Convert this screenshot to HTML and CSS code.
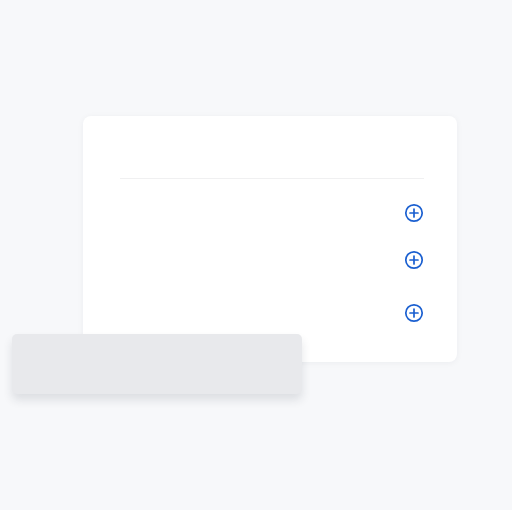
FILE: index.html
```html
<!DOCTYPE html>
<html lang="en">
<head>
    <meta charset="UTF-8">
    <title>Panel</title>
    <link rel="stylesheet" href="styles.css">
</head>
<body>
    <div class="stage">
        <div class="card">
            <div class="divider"></div>
            <div class="row row-1">
                <svg class="add" viewBox="0 0 20 20"><circle cx="10" cy="10" r="8.2"/><path d="M10 6v8M6 10h8"/></svg>
            </div>
            <div class="row row-2">
                <svg class="add" viewBox="0 0 20 20"><circle cx="10" cy="10" r="8.2"/><path d="M10 6v8M6 10h8"/></svg>
            </div>
            <div class="row row-3">
                <svg class="add" viewBox="0 0 20 20"><circle cx="10" cy="10" r="8.2"/><path d="M10 6v8M6 10h8"/></svg>
            </div>
        </div>
        <div class="toast"></div>
    </div>
</body>
</html>
```

FILE: styles.css
```css
* {
    box-sizing: border-box;
}

body {
    margin: 0;
    background: #f7f8fa;
    font-family: 'Roboto', sans-serif;
    height: 510px;
    overflow: hidden;
}

.stage {
    padding: 116px 0 0 12px;
}

.card {
    margin-left: 71px;
    width: 374px;
    height: 246px;
    background: #fff;
    border-radius: 8px;
    box-shadow: 0 1px 6px rgba(20, 30, 50, 0.05);
    padding: 62px 33px 0 37px;
}

.divider {
    height: 1px;
    background: #f0f0f1;
}

.row {
    display: flex;
    justify-content: flex-end;
}

.row-1 {
    margin-top: 24px;
}

.row-2 {
    margin-top: 27px;
}

.row-3 {
    margin-top: 33px;
}

.add {
    width: 20px;
    height: 20px;
    fill: none;
    stroke: #1a5fd0;
    stroke-width: 1.7;
    stroke-linecap: round;
}

.toast {
    position: relative;
    margin-top: -28px;
    width: 290px;
    height: 60px;
    background: #e8e9ec;
    border-radius: 5px;
    box-shadow: 0 6px 10px rgba(30, 40, 60, 0.12);
}
```
